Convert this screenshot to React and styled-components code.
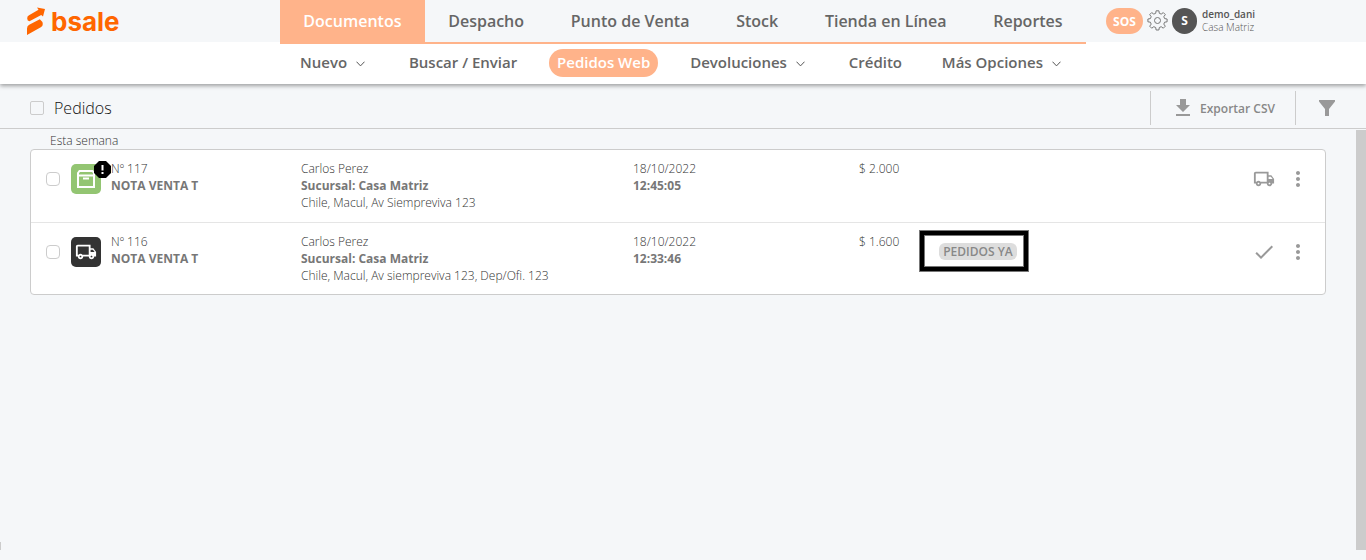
import styled, { createGlobalStyle } from "styled-components";
import {
  MdCheck,
  MdFileDownload,
  MdMoreVert,
  MdOutlineLocalShipping,
} from "react-icons/md";

const GlobalStyle = createGlobalStyle`
  * {
    box-sizing: border-box;
  }
  body {
    margin: 0;
    background-color: #f5f7f9;
    color: #333;
    font-family: "Open Sans", "Noto Sans", sans-serif;
    font-size: 12px;
    font-weight: 300;
    line-height: 17px;
  }
  a {
    color: inherit;
    text-decoration: none;
  }
  button {
    padding: 0;
    border: 0;
    background: none;
    color: inherit;
    font: inherit;
    cursor: pointer;
  }
`;

const Page = styled.div`
  display: flex;
  flex-direction: column;
  min-height: 100vh;
`;

const Header = styled.header`
  display: grid;
  grid-template-columns: 280px minmax(0, 806px) 1fr;
  background: linear-gradient(#f5f7f9 42px, #fff 42px);
  box-shadow: 0 2px 4px rgba(0, 0, 0, 0.35);
  z-index: 1;
`;

const Logo = styled.a`
  display: flex;
  align-items: center;
  gap: 5px;
  height: 42px;
  padding-left: 26px;
`;

const Wordmark = styled.span`
  padding-top: 2px;
  color: #ff6600;
  font-family: Inter, sans-serif;
  font-size: 26px;
  font-weight: 700;
  line-height: 40px;
`;

const Tabs = styled.nav`
  display: flex;
  height: 44px;
  border-bottom: 2px solid #ffb38a;
`;

const Tab = styled.a`
  display: flex;
  flex: 1 1 auto;
  align-items: center;
  justify-content: center;
  background-color: ${(props) => (props.$active ? "#ffb38a" : "transparent")};
  color: ${(props) => (props.$active ? "#fff" : "#666")};
  font-size: 16px;
  font-weight: 600;
`;

const User = styled.div`
  display: flex;
  align-items: center;
  gap: 4px;
  height: 42px;
  padding-left: 20px;
`;

const Sos = styled.button`
  width: 37px;
  height: 26px;
  border-radius: 13px;
  background-color: #ffb38a;
  color: #fff;
  font-weight: 700;
`;

const Avatar = styled.span`
  width: 25px;
  height: 26px;
  border-radius: 13px;
  background-color: #555;
  color: #fff;
  font-weight: 700;
  line-height: 26px;
  text-align: center;
`;

const UserName = styled.div`
  padding-left: 1px;
  color: #555;
  font-size: 10px;
  line-height: 13px;
  strong {
    display: block;
    font-weight: 600;
  }
`;

const SubMenu = styled.nav`
  display: flex;
  grid-column: 2;
  align-items: center;
  justify-content: space-between;
  height: 40px;
  padding: 0 13px 2px 12px;
`;

const SubItem = styled.a`
  display: flex;
  align-items: center;
  gap: 9px;
  height: 28px;
  padding: 0 ${(props) => (props.$menu ? "12px" : "8px")} 1px 8px;
  border-radius: 14px;
  background-color: ${(props) => (props.$active ? "#ffb38a" : "transparent")};
  color: ${(props) => (props.$active ? "#fff" : "#666")};
  font-size: 15px;
  font-weight: 600;
  white-space: nowrap;
  svg {
    margin-top: 3px;
  }
`;

const Toolbar = styled.div`
  display: flex;
  align-items: center;
  height: 45px;
  padding-left: 30px;
  padding-top: 4px;
  border-bottom: 1px solid #ccc;
`;

const Check = styled.input.attrs({ type: "checkbox" })`
  display: block;
  width: 14px;
  height: 14px;
  margin: 0;
  border: 1px solid #ccc;
  border-radius: ${(props) => (props.$round ? "4px" : "2px")};
  background-color: ${(props) => (props.$round ? "#fff" : "transparent")};
  appearance: none;
`;

const Title = styled.label`
  flex: 1;
  padding-left: 10px;
  color: #111;
  font-size: 16px;
`;

const Tool = styled.button`
  display: flex;
  align-items: center;
  justify-content: center;
  gap: 5px;
  height: 34px;
  padding: 0 20px;
  border-left: 1px solid #ccc;
  color: #888;
  font-weight: 600;
  svg {
    color: #999;
  }
`;

const FilterTool = styled(Tool)`
  padding: 0 31px 0 23px;
`;

const Main = styled.main`
  display: flex;
  flex: 1;
`;

const Handle = styled.div`
  align-self: flex-end;
  width: 1px;
  height: 8px;
  margin-bottom: 10px;
  background-color: #ccc;
`;

const ScrollBar = styled.div`
  width: 10px;
  margin: 1px 0 10px;
  background-color: #ccc;
`;

const Content = styled.section`
  flex: 1;
  padding: 3px 30px 0 29px;
`;

const Period = styled.h2`
  margin: 0;
  padding-left: 20px;
  font-size: 12px;
  font-weight: 300;
`;

const Card = styled.div`
  border: 1px solid #ccc;
  border-radius: 4px;
  background-color: #fff;
`;

const Table = styled.table`
  width: 100%;
  border-collapse: collapse;
  table-layout: fixed;
`;

const Row = styled.tr`
  & + & {
    border-top: 1px solid #e5e5e5;
  }
`;

const Cell = styled.td`
  height: 72px;
  padding: 10px 0 10px ${(props) => props.$left || "0"};
  vertical-align: top;
  strong {
    display: block;
    color: #777;
    font-weight: 700;
  }
`;

const Doc = styled.div`
  display: flex;
  gap: 10px;
`;

const DocIcon = styled.span`
  position: relative;
  display: flex;
  align-items: center;
  justify-content: center;
  width: 30px;
  height: 30px;
  margin-top: 4px;
  border-radius: 5px;
  background-color: ${(props) => (props.$sent ? "#333" : "#93c572")};
  color: #fff;
`;

const Alert = styled.svg`
  position: absolute;
  top: -3px;
  right: -10px;
`;

const TagBox = styled.div`
  width: 110px;
  height: 42px;
  margin-top: -3px;
  padding: 8px 7px 0 15px;
  border: 5px solid #000;
  outline: 1px solid #777;
  outline-offset: -1px;
  box-shadow: inset 0 0 0 1px #777;
`;

const Tag = styled.span`
  display: block;
  border-radius: 6px;
  background-color: #ddd;
  color: #888;
  font-weight: 600;
  text-align: center;
`;

const Actions = styled.div`
  display: flex;
  align-items: center;
  gap: 10px;
  height: 24px;
  margin-top: 7px;
  color: #999;
  button {
    display: flex;
  }
`;

const Status = styled.span`
  display: flex;
  justify-content: center;
  width: 24px;
`;

const tabs = [
  "Documentos",
  "Despacho",
  "Punto de Venta",
  "Stock",
  "Tienda en Línea",
  "Reportes",
];

const subItems = [
  { label: "Nuevo", menu: true },
  { label: "Buscar / Enviar" },
  { label: "Pedidos Web" },
  { label: "Devoluciones", menu: true },
  { label: "Crédito" },
  { label: "Más Opciones", menu: true },
];

const orders = [
  {
    id: 117,
    address: "Chile, Macul, Av Siempreviva 123",
    time: "12:45:05",
    total: "$ 2.000",
    sent: false,
  },
  {
    id: 116,
    address: "Chile, Macul, Av siempreviva 123, Dep/Ofi. 123",
    time: "12:33:46",
    total: "$ 1.600",
    sent: true,
    tag: "PEDIDOS YA",
  },
];

const LogoMark = () => (
  <svg width="20" height="28" viewBox="0 0 20 28" fill="#ff6600">
    <path d="M11 0.5 19 2 17 9.5 15.2 8 3.5 14.3Q1.2 14 1.2 11.5 1 9.3 3 8.2L12.5 2.8Z" />
    <path d="M13.8 12.2Q16.8 14.5 16.8 17 16.8 19.2 14.8 20.2L1 28V21.5Q1 19 3.2 17.8Z" />
  </svg>
);

const Chevron = () => (
  <svg width="9" height="6" viewBox="0 0 9 6" fill="none" stroke="#555">
    <path d="M0.5 0.7 4.5 4.9 8.5 0.7" />
  </svg>
);

const Gear = () => (
  <svg width="21" height="22" viewBox="0.5 0 21 22" fill="none" stroke="#777">
    <path d="M9.6 0.8h2.8l.4 2.5 1.9.8 2.1-1.5 2 2-1.5 2.1.8 1.9 2.5.4v2.8l-2.5.4-.8 1.9 1.5 2.1-2 2-2.1-1.5-1.9.8-.4 2.5H9.6l-.4-2.5-1.9-.8-2.1 1.5-2-2 1.5-2.1-.8-1.9-2.5-.4V9l2.5-.4.8-1.9-1.5-2.1 2-2 2.1 1.5 1.9-.8z" />
    <circle cx="11" cy="10.5" r="3" />
  </svg>
);

const Box = () => (
  <svg width="18" height="18" viewBox="0 0 18 18" fill="none" stroke="#fff">
    <path d="M1 5.5V17H17V5.5Z" strokeWidth="2" />
    <path d="M1 5V3L2.5 1H15.5L17 3V5" strokeWidth="2" />
    <path d="M6 8.5H12" strokeWidth="2" />
  </svg>
);

const Funnel = () => (
  <svg width="16" height="16" viewBox="0 0 16 16" fill="currentColor">
    <path d="M0 0H16V1.5L10 9V16H6V9L0 1.5Z" />
  </svg>
);

const App = () => {
  return (
    <>
      <GlobalStyle />
      <Page>
        <Header>
          <Logo href="#">
            <LogoMark />
            <Wordmark>bsale</Wordmark>
          </Logo>
          <Tabs>
            {tabs.map((tab) => (
              <Tab key={tab} href="#" $active={tab === "Documentos"}>
                {tab}
              </Tab>
            ))}
          </Tabs>
          <User>
            <Sos>SOS</Sos>
            <Gear />
            <Avatar>S</Avatar>
            <UserName>
              <strong>demo_dani</strong>
              Casa Matriz
            </UserName>
          </User>
          <SubMenu>
            {subItems.map((item) => (
              <SubItem
                key={item.label}
                href="#"
                $active={item.label === "Pedidos Web"}
                $menu={item.menu}
              >
                {item.label}
                {item.menu && <Chevron />}
              </SubItem>
            ))}
          </SubMenu>
        </Header>

        <Toolbar>
          <Check id="all" />
          <Title htmlFor="all">Pedidos</Title>
          <Tool>
            <MdFileDownload size={24} />
            Exportar CSV
          </Tool>
          <FilterTool aria-label="Filtrar">
            <Funnel />
          </FilterTool>
        </Toolbar>

        <Main>
          <Handle />
          <Content>
            <Period>Esta semana</Period>
            <Card>
              <Table>
                <colgroup>
                  <col width="40" />
                  <col width="230" />
                  <col width="332" />
                  <col width="226" />
                  <col width="60" />
                  <col />
                  <col width="73" />
                </colgroup>
                <tbody>
                  {orders.map((order) => (
                    <Row key={order.id}>
                      <Cell $left="15px">
                        <Actions>
                          <Check $round aria-label={`Nº ${order.id}`} />
                        </Actions>
                      </Cell>
                      <Cell>
                        <Doc>
                          <DocIcon $sent={order.sent}>
                            {order.sent ? (
                              <MdOutlineLocalShipping size={22} />
                            ) : (
                              <>
                                <Box />
                                <Alert width="17" height="17" viewBox="0 0 17 17">
                                  <path d="M5 0H12L17 5V12L12 17H5L0 12V5Z" />
                                  <path
                                    d="M8.5 4V9.5M8.5 11V13"
                                    stroke="#fff"
                                    strokeWidth="2"
                                  />
                                </Alert>
                              </>
                            )}
                          </DocIcon>
                          <div>
                            Nº {order.id}
                            <strong>NOTA VENTA T</strong>
                          </div>
                        </Doc>
                      </Cell>
                      <Cell>
                        Carlos Perez
                        <strong>Sucursal: Casa Matriz</strong>
                        {order.address}
                      </Cell>
                      <Cell>
                        18/10/2022
                        <strong>{order.time}</strong>
                      </Cell>
                      <Cell>{order.total}</Cell>
                      <Cell>
                        {order.tag && (
                          <TagBox>
                            <Tag>{order.tag}</Tag>
                          </TagBox>
                        )}
                      </Cell>
                      <Cell>
                        <Actions>
                          <Status>
                            {order.sent ? (
                              <MdCheck size={24} />
                            ) : (
                              <MdOutlineLocalShipping size={22} />
                            )}
                          </Status>
                          <button aria-label="Opciones">
                            <MdMoreVert size={24} />
                          </button>
                        </Actions>
                      </Cell>
                    </Row>
                  ))}
                </tbody>
              </Table>
            </Card>
          </Content>
          <ScrollBar />
        </Main>
      </Page>
    </>
  );
};

export default App;
